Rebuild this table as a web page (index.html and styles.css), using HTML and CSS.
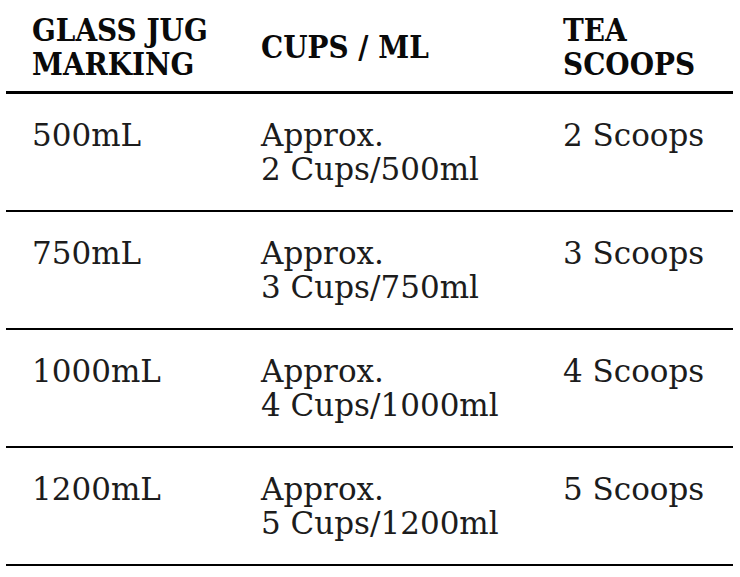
FILE: index.html
```html
<!DOCTYPE html>
<html>
<head>
<meta charset="utf-8">
<link rel="stylesheet" href="styles.css">
</head>
<body>
<table class="jug-table">
  <thead>
    <tr>
      <th class="c1">GLASS JUG<br>MARKING</th>
      <th class="c2">CUPS / ML</th>
      <th class="c3">TEA<br>SCOOPS</th>
    </tr>
  </thead>
  <tbody>
    <tr>
      <td>500mL</td>
      <td>Approx.<br>2 Cups/500ml</td>
      <td>2 Scoops</td>
    </tr>
    <tr>
      <td>750mL</td>
      <td>Approx.<br>3 Cups/750ml</td>
      <td>3 Scoops</td>
    </tr>
    <tr>
      <td>1000mL</td>
      <td>Approx.<br>4 Cups/1000ml</td>
      <td>4 Scoops</td>
    </tr>
    <tr>
      <td>1200mL</td>
      <td>Approx.<br>5 Cups/1200ml</td>
      <td>5 Scoops</td>
    </tr>
  </tbody>
</table>
</body>
</html>
```

FILE: styles.css
```css
html, body {
  margin: 0;
  padding: 0;
  background: #ffffff;
}
body {
  padding: 0 7px 0 6px;
  font-family: "DejaVu Serif", "Liberation Serif", serif;
  color: #1c1c1c;
}
.jug-table {
  width: 727px;
  border-collapse: collapse;
  table-layout: fixed;
}
.jug-table th,
.jug-table td {
  padding: 0 0 0 26px;
  text-align: left;
}
.jug-table th {
  font-family: "DejaVu Serif Condensed", "DejaVu Serif", serif;
  font-weight: bold;
  font-size: 31px;
  line-height: 34px;
  vertical-align: middle;
  padding-top: 13px;
  padding-bottom: 10px;
  border-bottom: 3px solid #000000;
  color: #0a0a0a;
}
.jug-table .c1 { width: 203px; }
.jug-table .c2 { width: 276px; }
.jug-table .c3 { width: 170px; }
.jug-table td {
  font-size: 31px;
  line-height: 34px;
  vertical-align: top;
  padding-top: 24px;
  padding-bottom: 24px;
  border-bottom: 2px solid #000000;
  font-weight: normal;
}
```
